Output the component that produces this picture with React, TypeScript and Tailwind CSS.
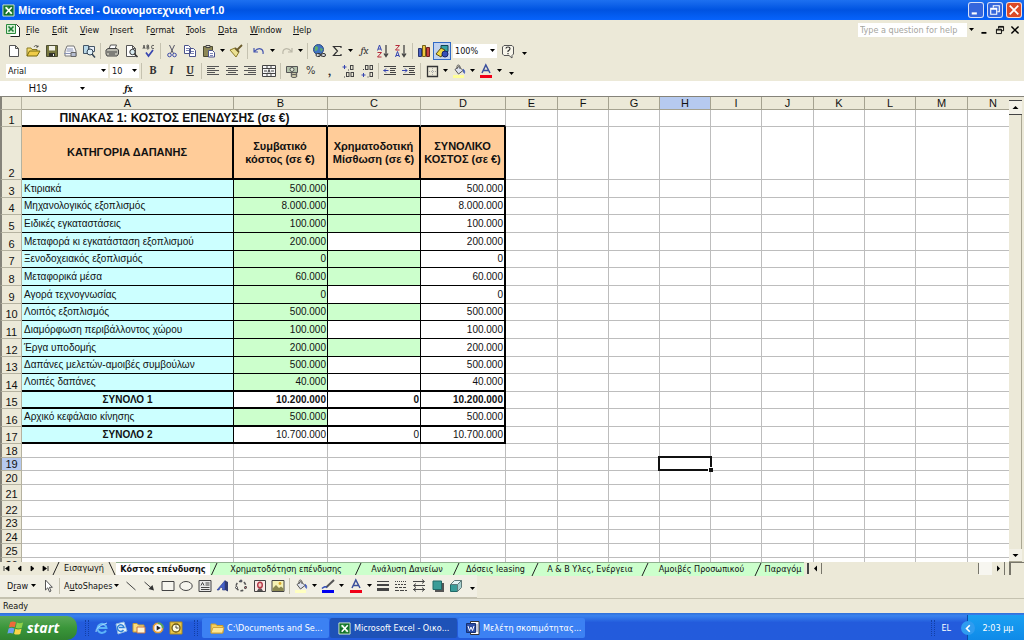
import { ReactNode } from "react";
import clsx from "clsx";

const UI_FONT = "font-['DejaVu_Sans_Condensed','DejaVu_Sans',sans-serif]";

/* ---------- icons ---------- */

function Svg({ children, className = "size-[14px]" }: { children: ReactNode; className?: string }) {
  return (
    <svg viewBox="0 0 14 14" className={clsx("shrink-0 overflow-visible", className)} fill="none" stroke="#444" aria-hidden="true">
      {children}
    </svg>
  );
}

const alignLines = (rows: [number, number][]) => (
  <Svg>
    {rows.map(([x1, x2], i) => (
      <path key={i} d={`M${x1} ${2.5 + i * 2}H${x2}`} stroke="#555" />
    ))}
  </Svg>
);

const excelIcon = (
  <Svg className="size-[13px]">
    <path d="M1 1h12v12H1z" fill="#12702b" stroke="#d8ecd0" />
    <path d="M3 3h4v3H3zM8 8h3v3H8z" fill="#4fae58" stroke="none" />
    <path d="M4 3.500l6.500 7M10.500 3.500L4 10.500" stroke="#fff" strokeWidth="1.800" />
  </Svg>
);

const bookIcon = (
  <Svg>
    <path d="M3.500 1.500h7l3 3v9h-9" fill="#fff" stroke="#222" />
    <path d="M.5 1.500h9v9h-9z" fill="#d6efd4" stroke="#2a8a3c" />
    <path d="M2.500 3.500l5 5M7.500 3.500l-5 5" stroke="#1b7d33" strokeWidth="1.600" />
  </Svg>
);

const bucket = (bar: string) => (
  <Svg>
    <path d="M3 5.500l4-3 4 4-4.500 3.500z" fill="#dfe3ee" stroke="#555" />
    <path d="M5 5V2.500c0-2 3-2 3 .5v2" stroke="#555" />
    <path d="M11 5c2 1 2 3 1.500 4.500-1-.5-1.500-2-1.500-4.500z" fill="#3b56b8" stroke="#3b56b8" strokeWidth=".5" />
    <path d="M1 12.500h11" stroke={bar} strokeWidth="3" />
  </Svg>
);

const fontColor = (
  <Svg>
    <path d="M3 9l3.800-8L11 9M4.500 6.500h5" stroke="#3a4f9c" strokeWidth="1.500" />
    <path d="M1 12.500h12" stroke="#f00018" strokeWidth="3" />
  </Svg>
);

const paper = <path d="M2.500 1.500h6l3 3v8h-9zM8.500 1.500v3h3" fill="#fff" stroke="#555" />;

const icons: Record<string, ReactNode> = {
  new: <Svg>{paper}</Svg>,
  open: (
    <Svg>
      <path d="M1 12V4h4l1 1.500h5V7" fill="#f5dc6e" stroke="#8a7a20" />
      <path d="M1 12l2.500-5H14l-3 5z" fill="#f0cc48" stroke="#75680f" />
      <path d="M8 3c1-2 3-2 4 0m0-1.500V3h-2" stroke="#333" strokeWidth=".8" />
    </Svg>
  ),
  save: (
    <Svg>
      <path d="M1.500 1.500h11v11h-11z" fill="#77773f" stroke="#4c4d33" />
      <path d="M4 2h6v4.500H4z" fill="#f1f1e6" stroke="none" />
      <path d="M4 9h6v3.500H4z" fill="#30312a" stroke="none" />
      <path d="M8.500 10v2" stroke="#eee" />
    </Svg>
  ),
  permission: (
    <Svg>
      <path d="M2 7l2-5h7l2 5v5H2z" fill="#f8f8fb" stroke="#777" />
      <path d="M4 5h6M3.500 7h7M1 9.500h9" stroke="#8a94b5" />
      <path d="M8 8.500h5v4H8z" fill="#b5bdd1" stroke="#666" />
    </Svg>
  ),
  searchDoc: (
    <Svg>
      <path d="M1.500 1.500h5v8h-5z" fill="#b8d8e8" stroke="#456" />
      <path d="M7 2.500h5.500v5H7z" fill="#e8eef8" stroke="#456" />
      <circle cx="8" cy="8" r="3" fill="#dff0f8" stroke="#345" />
      <path d="M10 10l3 3.500" stroke="#345" strokeWidth="1.500" />
    </Svg>
  ),
  print: (
    <Svg>
      <path d="M4 5l1.500-4h6L10 5z" fill="#fff" stroke="#555" />
      <path d="M1 6l2-1.500h9L13.500 6v4L12 12H2l-1-2z" fill="#b8b8ae" stroke="#444" />
      <path d="M2 8h10M4 10h6" stroke="#444" />
    </Svg>
  ),
  preview: (
    <Svg>
      {paper}
      <circle cx="8.500" cy="8" r="2.700" fill="#d9ecf2" stroke="#333" />
      <path d="M10.500 10l3 3" stroke="#333" strokeWidth="1.600" />
    </Svg>
  ),
  spelling: (
    <Svg>
      <path d="M1 5l1-4 1 4M1.500 3.500h1.200M5 1v4h1.500q1-1 0-2H5h1.300q1-1 0-2zM12 1.500q-2.500-1-2.500 1.500T12 4.500" stroke="#444" strokeWidth=".8" />
      <path d="M4 8.500l2.500 3.500L11 6" stroke="#3846b0" strokeWidth="1.700" />
    </Svg>
  ),
  cut: (
    <Svg>
      <path d="M4.500 1l4 8.500M9.500 1l-4 8.500" stroke="#556" />
      <circle cx="4.500" cy="11" r="1.800" stroke="#3c4aa8" />
      <circle cx="9.500" cy="11" r="1.800" stroke="#3c4aa8" />
    </Svg>
  ),
  copy: (
    <Svg>
      <path d="M1.500 1.500h4l2 2v6h-6zM6.500 4.500h4l2 2v6h-6z" fill="#fff" stroke="#4a538c" />
      <path d="M3 4.500h3M3 6.500h3M8 7.500h3M8 9.500h3" stroke="#7b83b5" />
    </Svg>
  ),
  paste: (
    <Svg>
      <path d="M1.500 2.500h9v10h-9z" fill="#8d8756" stroke="#4c4a32" />
      <path d="M4 1.500h4v2H4z" fill="#e0deca" stroke="#444" />
      <path d="M6.500 6.500h4l2 2v4.500h-6z" fill="#fff" stroke="#4a538c" />
      <path d="M8 9.500h3M8 11.500h3" stroke="#7b83b5" />
    </Svg>
  ),
  painter: (
    <Svg>
      <path d="M1 6l5-2 4 4-3 5z" fill="#ece193" stroke="#8b7b28" />
      <path d="M6 4l4 4M8 6l5-5" stroke="#6a5b2b" strokeWidth="1.800" />
    </Svg>
  ),
  undo: (
    <Svg>
      <path d="M2 4v4h4M2.500 7.500C6 3 12 4 11 10" stroke="#4757b0" strokeWidth="1.200" />
    </Svg>
  ),
  redo: (
    <Svg>
      <path d="M12 4v4H8M11.500 7.500C8 3 2 4 3 10" stroke="#bbb8a8" strokeWidth="1.200" />
    </Svg>
  ),
  link: (
    <Svg>
      <circle cx="6.500" cy="5.500" r="5" fill="#4173c0" stroke="#2b4b86" />
      <path d="M3 2.500q3-1 3 1.500t-3 3zM8 4l3 1-2 3z" fill="#63b06a" stroke="none" />
      <rect x="4" y="9.500" width="4.500" height="3" rx="1.500" fill="#d2d6de" stroke="#333" />
      <rect x="9" y="9.500" width="4.500" height="3" rx="1.500" fill="#d2d6de" stroke="#333" />
      <path d="M6.500 11h4" />
    </Svg>
  ),
  sum: (
    <Svg>
      <path d="M11 4V2.500H3.500L7.500 7l-4 4.500H11V10" stroke="#333" strokeWidth="1.200" />
    </Svg>
  ),
  sortAsc: (
    <Svg>
      <path d="M1.500 6.500L3.500 1l2 5.500M2 5h3" stroke="#3444b0" />
      <path d="M1.500 8.500h4l-4 4.500h4" stroke="#b52a3a" />
      <path d="M10 1v11M8 9.500l2 3 2-3" stroke="#444" strokeWidth="1.300" />
    </Svg>
  ),
  sortDesc: (
    <Svg>
      <path d="M1.500 1.500h4l-4 4.500h4" stroke="#b52a3a" />
      <path d="M1.500 13l2-5.500 2 5.500M2 11.500h3" stroke="#3444b0" />
      <path d="M10 1v11M8 9.500l2 3 2-3" stroke="#444" strokeWidth="1.300" />
    </Svg>
  ),
  chart: (
    <Svg>
      <path d="M1.500 4.500h3v8h-3z" fill="#4a62c4" stroke="#28346f" />
      <path d="M5.500 1.500h3v11h-3z" fill="#efc842" stroke="#75601a" />
      <path d="M9.500 3.500h3v9h-3z" fill="#c9433e" stroke="#6c2020" />
    </Svg>
  ),
  drawing: (
    <Svg>
      <path d="M6 1.500h7v6H6z" fill="#38a3a5" stroke="#145" />
      <path d="M1 10l5-6 4 2-4 7z" fill="#f1d944" stroke="#544a10" />
      <circle cx="10" cy="10" r="3" fill="#3550b8" stroke="#152468" />
    </Svg>
  ),
  help: (
    <Svg>
      <path d="M3 1.500h8l1.500 1.500v7L11 11.500V14L8 11.500H3L1.500 10V3z" fill="#f7f5ea" stroke="#555" />
      <path d="M5 4.500q0-1.500 2-1.500t2 1.500T7 7v1M7 9v1.200" stroke="#333" strokeWidth="1.200" />
    </Svg>
  ),
  alignLeft: alignLines([[1, 13], [1, 9], [1, 13], [1, 9], [1, 13]]),
  alignCenter: alignLines([[1, 13], [3, 11], [1, 13], [3, 11], [1, 13]]),
  alignRight: alignLines([[1, 13], [5, 13], [1, 13], [5, 13], [1, 13]]),
  merge: (
    <Svg>
      <path d="M.5 1.500h13v11H.5zM.5 4.500h13M.5 9.500h13M5 1.500v3M9 1.500v3M5 9.500v3M9 9.500v3" fill="#f6f6f6" />
      <path d="M2 7h3M9 7h3M6 8.500L7 5.500l1 3" />
    </Svg>
  ),
  currency: (
    <Svg>
      <path d="M1.500 2.500h11v6h-11z" fill="#b4c3ac" stroke="#555" />
      <circle cx="7" cy="5.500" r="2" fill="#e3ead8" stroke="#555" />
      <ellipse cx="9" cy="10" rx="3" ry="1.500" fill="#d8d3b0" stroke="#555" />
      <ellipse cx="9" cy="12" rx="3" ry="1.500" fill="#d8d3b0" stroke="#555" />
    </Svg>
  ),
  incDecimal: (
    <Svg>
      <path d="M3.500 1v4M1.500 3h4" stroke="#3444b0" />
      <rect x="9.500" y="1.500" width="2.500" height="4" />
      <path d="M7.500 5.500v1M3.500 12.500v1" />
      <rect x="5.500" y="8.500" width="2.500" height="4" />
      <rect x="10" y="8.500" width="2.500" height="4" />
    </Svg>
  ),
  decDecimal: (
    <Svg>
      <path d="M3.500 9v4M1.500 11h4" stroke="#3444b0" />
      <rect x="5.500" y="1.500" width="2.500" height="4" />
      <rect x="10" y="1.500" width="2.500" height="4" />
      <path d="M3.500 5v1M8 12.500v1" />
      <rect x="10" y="8.500" width="2.500" height="4" />
    </Svg>
  ),
  outdent: (
    <Svg>
      <path d="M1 2.500h12M7 4.500h6M7 6.500h5M7 8.500h6M1 10.500h12" />
      <path d="M5.500 6.500h-5M3 4.500l-2 2 2 2" stroke="#3444b0" />
    </Svg>
  ),
  indent: (
    <Svg>
      <path d="M1 2.500h12M7 4.500h6M7 6.500h5M7 8.500h6M1 10.500h12" />
      <path d="M0 6.500h5M3 4.500l2 2-2 2" stroke="#3444b0" />
    </Svg>
  ),
  borders: (
    <Svg>
      <path d="M2.500 2.500h10v10h-10z" stroke="#333" strokeWidth="1.300" />
      <path d="M7.500 4v7M4 7.500h7" stroke="#aaa" strokeDasharray="1 1" />
    </Svg>
  ),
  fill: bucket("#ffff99"),
  fillShape: bucket("#ffffc0"),
  fontColor,
  lineColor: (
    <Svg>
      <path d="M5 8.500l8-7.500" stroke="#555" strokeWidth="2" />
      <path d="M1 9.500q3-3 5-1" stroke="#3550b8" strokeWidth="1.500" />
      <path d="M1 12.500h12" stroke="#0000f0" strokeWidth="3" />
    </Svg>
  ),
  pointer: (
    <Svg>
      <path d="M4.500 1v10l2.300-2.200 1.700 4 1.500-.8-1.600-3.700h3z" fill="#fff" stroke="#555" />
    </Svg>
  ),
  line: (
    <Svg>
      <path d="M2.500 3l9 8" />
    </Svg>
  ),
  arrow: (
    <Svg>
      <path d="M2.500 3l8 7" />
      <path d="M12 11.500L6.500 10l4-4z" fill="#333" stroke="none" />
    </Svg>
  ),
  rect: (
    <Svg>
      <path d="M1 2.500h12v9H1z" fill="#f6f5ee" />
    </Svg>
  ),
  oval: (
    <Svg>
      <ellipse cx="7" cy="7" rx="6.200" ry="4.500" fill="#f6f5ee" />
    </Svg>
  ),
  textbox: (
    <Svg>
      <path d="M1 1.500h12v11H1z" fill="#e8e8e8" />
      <path d="M3 6.500l1.500-3 1.500 3M7.500 4h4M7.500 6h4M3 8.500h8.500M3 10.500h8.500" />
    </Svg>
  ),
  wordart: (
    <Svg>
      <path d="M1 11L9 1.500v9.500H6.500V8.500H4.500L3 11z" fill="#4461c9" stroke="#29388a" strokeWidth=".6" />
      <path d="M9 1.500l3 1.500v9.500L9 11z" fill="#303c74" stroke="none" />
    </Svg>
  ),
  diagram: (
    <Svg>
      <circle cx="7" cy="7" r="4.800" strokeDasharray="3 2" stroke="#555" strokeWidth="1.500" />
      <circle cx="7" cy="2" r="1" fill="#8fa0d8" />
      <circle cx="2.500" cy="8.500" r="1" fill="#f4f4f4" />
      <circle cx="11.500" cy="8.500" r="1" fill="#c9787e" />
    </Svg>
  ),
  clipart: (
    <Svg>
      <path d="M1.500 1.500h11v11h-11z" fill="#fbe9e6" stroke="#444" />
      <path d="M4 12l1.500-2.500H8.500L10 12z" fill="#555" stroke="none" />
      <ellipse cx="7" cy="6" rx="2.300" ry="2.800" fill="#f6cfc4" stroke="#b53a4a" strokeWidth="1.400" />
      <path d="M7 8.500v2" stroke="#b53a4a" />
    </Svg>
  ),
  picture: (
    <Svg>
      <path d="M1 1.500h12v11H1z" fill="#f6f2b4" stroke="#444" />
      <path d="M1.500 12V9.500L5 6l3 3 2-1.500 2.500 2V12z" fill="#8a8750" stroke="none" />
      <circle cx="9" cy="4.500" r="1.400" fill="#d8a72e" stroke="none" />
    </Svg>
  ),
  lineStyle: (
    <Svg>
      <path d="M1 2.500h12" />
      <path d="M1 6h12" strokeWidth="2" />
      <path d="M1 10.500h12" strokeWidth="3" />
    </Svg>
  ),
  dashStyle: (
    <Svg>
      <path d="M1 2.500h12" strokeDasharray="1 1" />
      <path d="M1 5.500h12" strokeDasharray="2 1" />
      <path d="M1 8.500h12" strokeDasharray="3 1" />
      <path d="M1 11.500h12" strokeDasharray="4 1" />
    </Svg>
  ),
  arrowStyle: (
    <Svg>
      <path d="M1 2.500h11M2 6.500h11M1 10.500h12M10 .5l2.500 2-2.500 2M4 4.500l-2.500 2 2.500 2M10 8.500l2.500 2-2.500 2M4 8.500l-2.500 2 2.500 2" />
    </Svg>
  ),
  shadow: (
    <Svg>
      <path d="M4 4h9v9H4z" fill="#555" stroke="none" />
      <path d="M2 2h8.500v8.500H2z" fill="#3a9c98" stroke="#206a68" />
    </Svg>
  ),
  cube: (
    <Svg>
      <path d="M1.500 5.500h7v7h-7z" fill="#3a9c98" stroke="#206a68" />
      <path d="M1.500 5.500l4-4h7l-4 4z" fill="#e4f4f4" stroke="#607a7a" />
      <path d="M12.500 1.500v7l-4 4v-7z" fill="#a7cfce" stroke="#607a7a" />
    </Svg>
  ),
  ie: (
    <Svg>
      <path d="M11 9.500A4.500 4.500 0 1 1 11.500 7H3" stroke="#5cb4f8" strokeWidth="2" />
      <path d="M1 11Q0 6 12 2" stroke="#a8dafc" />
    </Svg>
  ),
  outlook: (
    <Svg>
      <path d="M2 3l8-2 3 9-9 3z" fill="#e6f2fc" stroke="#8cb8e0" />
      <path d="M9.500 9A3.300 3.300 0 1 1 10 6.500H5" stroke="#2b7fd8" strokeWidth="1.500" />
    </Svg>
  ),
  explorer: (
    <Svg>
      <path d="M1 11V2.500h4L6.500 4H12v7z" fill="#f9dd82" stroke="#c59a35" />
      <path d="M5 6h8v6H5z" fill="#fff5d6" stroke="#c87540" />
    </Svg>
  ),
  media: (
    <Svg>
      <circle cx="7" cy="7" r="5.800" fill="#e9a13a" stroke="#486bb0" />
      <path d="M7 1.200A5.800 5.800 0 0 1 12.800 7H7z" fill="#58a85a" stroke="none" />
      <circle cx="7" cy="7" r="3.700" fill="#f8f8ff" stroke="none" />
      <path d="M5.700 4.500L9.800 7l-4.100 2.500z" fill="#222" stroke="none" />
    </Svg>
  ),
  clock: (
    <Svg>
      <path d="M1 1h12v12H1z" fill="#e8c548" stroke="#a88a20" />
      <circle cx="7" cy="7" r="4" fill="#fffbe0" stroke="#6a5712" strokeWidth="1.300" />
      <path d="M7 4.500V7h2.500" />
    </Svg>
  ),
  folder: (
    <Svg>
      <path d="M1 12V3h4.500L7 4.500h6V12z" fill="#f5cf5c" stroke="#c89a2a" />
      <path d="M1 12l2-5.500h11L12.500 12z" fill="#ffe794" stroke="#d0a63a" />
    </Svg>
  ),
  word: (
    <Svg>
      <path d="M4.500.5H13v13H4.500z" fill="#fff" stroke="#333" />
      <path d="M10 4h2M10 6h2M10 8h2M10 10h2" stroke="#8899c0" />
      <path d="M.5 2.500h9v9h-9z" fill="#2d4fa8" stroke="#16306f" />
      <path d="M2 5l1.500 4.500L5 6l1.500 3.500L8 5" stroke="#fff" />
    </Svg>
  ),
  flag: (
    <Svg className="size-[18px]">
      <g stroke="none">
        <path d="M2.500 2.500q2-1 4.500 0L6 6.500q-2-1-4.500 0z" fill="#ef6a3a" />
        <path d="M7.700 2.800q2 1 4.800 0l-1 4q-2.500 1-4.800 0z" fill="#8fd04a" />
        <path d="M1.300 7.300q2-1 4.500 0l-1 4q-2.500-1-4.500 0z" fill="#68a0ee" />
        <path d="M6.500 7.600q2 1 4.800 0l-1 4q-2.500 1-4.800 0z" fill="#f9d548" />
      </g>
    </Svg>
  ),
};

const glyphs: Record<string, ReactNode> = {
  bold: <b className="font-serif text-[11px]">B</b>,
  italic: <b className="font-serif text-[11px] italic">I</b>,
  underline: <b className="font-serif text-[11px] underline">U</b>,
  percent: <span className="text-[11px]">%</span>,
  comma: <b className="font-serif text-[14px]">,</b>,
  fx: <i className="font-serif text-[11px]">fx</i>,
};

function Caret({ className = "w-[7px]" }: { className?: string }) {
  return (
    <svg viewBox="0 0 7 4" className={clsx("h-1 shrink-0", className)} aria-hidden="true">
      <path d="M1 0h5L3.500 3z" fill="#000" />
    </svg>
  );
}

/* ---------- toolbars ---------- */

// A trailing "+" gives the button a drop-down caret.
function ToolButton({ id }: { id: string }) {
  const name = id.replace("+", "");
  return (
    <span className="flex items-center">
      <button
        type="button"
        aria-label={name}
        className={clsx(
          "flex h-[18px] w-[18px] items-center justify-center text-[#333]",
          name === "drawing" && "border border-[#316ac5] bg-[#c1d2ee]",
        )}
      >
        {icons[name] ?? glyphs[name]}
      </button>
      {id.endsWith("+") && (
        <button type="button" aria-label={`${name} options`} className="flex h-[18px] w-[9px] items-center justify-center">
          <Caret />
        </button>
      )}
    </span>
  );
}

function ToolGroup({ ids, width }: { ids: string[]; width: string }) {
  return (
    <div className={clsx("flex shrink-0 items-center justify-between", width)}>
      {ids.map(id => (
        <ToolButton key={id} id={id} />
      ))}
    </div>
  );
}

const Separator = () => <div className="h-4 w-px shrink-0 bg-[#c5c2b0]" />;

const Overflow = () => (
  <button type="button" aria-label="Toolbar options" className="flex h-[18px] w-[10px] items-end justify-center pb-1">
    <Caret />
  </button>
);

function Combo({ label, value, width }: { label: string; value: string; width: string }) {
  return (
    <label className={clsx("flex h-[14px] items-center bg-white pl-0.5", width)}>
      <select aria-label={label} className="w-0 flex-1 appearance-none bg-transparent text-[9px] leading-[14px] outline-none">
        <option>{value}</option>
      </select>
      <Caret className="w-[9px]" />
    </label>
  );
}

const menus = [
  { text: "File", key: 0, width: "w-[26px]" },
  { text: "Edit", key: 0, width: "w-[28px]" },
  { text: "View", key: 0, width: "w-[30px]" },
  { text: "Insert", key: 0, width: "w-[36px]" },
  { text: "Format", key: 1, width: "w-[40px]" },
  { text: "Tools", key: 0, width: "w-[32px]" },
  { text: "Data", key: 0, width: "w-[32px]" },
  { text: "Window", key: 0, width: "w-[43px]" },
  { text: "Help", key: 0, width: "w-[26px]" },
];

function TitleBar() {
  const button = "flex size-4 items-center justify-center rounded-[3px] border border-white/80";
  return (
    <header className="flex h-5 shrink-0 items-center bg-linear-to-b from-[#1d70f0] via-[#0053e1] to-[#0763fc] pr-[2px] pl-[2px]">
      {excelIcon}
      <h1 className="ml-[3px] flex-1 font-['Open_Sans','Noto_Sans',sans-serif] text-[10px] font-bold text-white">
        Microsoft Excel - Οικονομοτεχνική ver1.0
      </h1>
      <div className="flex gap-[3px]">
        <button type="button" aria-label="Minimize" className={clsx(button, "bg-[#3566dc]")}>
          <Svg className="size-3"><path d="M2 11h6" stroke="#fff" strokeWidth="2.500" /></Svg>
        </button>
        <button type="button" aria-label="Restore" className={clsx(button, "bg-[#3566dc]")}>
          <Svg className="size-3"><path d="M5 4V2h7v7h-2M2 5h7v7H2zM2 6h7" stroke="#fff" strokeWidth="1.300" /></Svg>
        </button>
        <button type="button" aria-label="Close" className={clsx(button, "bg-[#dc4a26]")}>
          <Svg className="size-3"><path d="M2 2l10 10M12 2L2 12" stroke="#fff" strokeWidth="2" /></Svg>
        </button>
      </div>
    </header>
  );
}

function MenuBar() {
  return (
    <nav className="flex h-5 shrink-0 items-center pr-1 pl-[6px]">
      {bookIcon}
      <div className="ml-[6px] flex flex-1">
        {menus.map(m => (
          <button key={m.text} type="button" className={clsx("text-left", m.width)}>
            {m.text.slice(0, m.key)}
            <u>{m.text[m.key]}</u>
            {m.text.slice(m.key + 1)}
          </button>
        ))}
      </div>
      <input
        aria-label="Type a question for help"
        placeholder="Type a question for help"
        className="h-[14px] w-[109px] bg-white pl-0.5 outline-none placeholder:text-[#a5a5a0]"
      />
      <Caret className="w-[9px]" />
      <div className="ml-1 flex gap-[5px]">
        <button type="button" aria-label="Minimize workbook">
          <Svg className="size-[10px]"><path d="M2 11h7" stroke="#000" strokeWidth="2.500" /></Svg>
        </button>
        <button type="button" aria-label="Restore workbook">
          <Svg className="size-[10px]"><path d="M5 5V2h7v6h-3M2 6h7v6H2zM5 3h7M2 7h7" stroke="#000" strokeWidth="1.300" /></Svg>
        </button>
        <button type="button" aria-label="Close workbook">
          <Svg className="size-[10px]"><path d="M2 2l10 10M12 2L2 12" stroke="#000" strokeWidth="2" /></Svg>
        </button>
      </div>
    </nav>
  );
}

function StandardToolbar() {
  return (
    <div className="flex h-[21px] shrink-0 items-center gap-[2px] pl-[5px]">
      <ToolGroup ids={["new", "open", "save", "permission", "searchDoc"]} width="w-[93px]" />
      <Separator />
      <ToolGroup ids={["print", "preview", "spelling"]} width="w-[55px]" />
      <Separator />
      <ToolGroup ids={["cut", "copy", "paste+", "painter"]} width="w-[82px]" />
      <Separator />
      <ToolGroup ids={["undo+", "redo+"]} width="w-[55px]" />
      <Separator />
      <ToolGroup ids={["link", "sum+", "fx", "sortAsc", "sortDesc"]} width="w-[100px]" />
      <Separator />
      <ToolGroup ids={["chart", "drawing"]} width="w-[36px]" />
      <Combo label="Zoom" value="100%" width="w-[44px]" />
      <ToolGroup ids={["help"]} width="w-[18px]" />
      <Overflow />
    </div>
  );
}

function FormatToolbar() {
  return (
    <div className="flex h-5 shrink-0 items-center gap-[2px] pl-[6px]">
      <Combo label="Font" value="Arial" width="w-[102px]" />
      <Combo label="Font size" value="10" width="w-[29px]" />
      <Separator />
      <ToolGroup ids={["bold", "italic", "underline"]} width="w-[55px]" />
      <Separator />
      <ToolGroup ids={["alignLeft", "alignCenter", "alignRight", "merge"]} width="w-[74px]" />
      <Separator />
      <ToolGroup ids={["currency", "percent", "comma", "incDecimal", "decDecimal"]} width="w-[93px]" />
      <Separator />
      <ToolGroup ids={["outdent", "indent"]} width="w-[37px]" />
      <Separator />
      <ToolGroup ids={["borders+", "fill+", "fontColor+"]} width="w-[81px]" />
      <Overflow />
    </div>
  );
}

function FormulaBar() {
  return (
    <div className="flex h-[15px] shrink-0 items-center bg-white">
      <input
        aria-label="Name box"
        defaultValue="H19"
        className="w-[76px] text-center font-['Liberation_Sans',Arial,sans-serif] text-[10px] outline-none"
      />
      <Caret className="w-[13px]" />
      <button type="button" aria-label="Insert function" className="ml-[31px] w-[17px] font-serif text-[10px] font-bold italic">
        fx
      </button>
      <input aria-label="Formula" className="h-full min-w-0 flex-1 outline-none" />
    </div>
  );
}

/* ---------- sheet ---------- */

const columns = [
  { name: "A", width: "w-[212px]" },
  { name: "B", width: "w-[94px]" },
  { name: "C", width: "w-[93px]" },
  { name: "D", width: "w-[85px]" },
  { name: "E", width: "w-[52px]" },
  { name: "F", width: "w-[51px]" },
  { name: "G", width: "w-[51px]" },
  { name: "H", width: "w-[51px]" },
  { name: "I", width: "w-[51px]" },
  { name: "J", width: "w-[52px]" },
  { name: "K", width: "w-[51px]" },
  { name: "L", width: "w-[51px]" },
  { name: "M", width: "w-[52px]" },
  { name: "N", width: "w-[51px]" },
];

interface CostRow {
  label: string;
  b: string;
  c?: string;
  d: string;
  height: string;
  leased?: boolean; // column C open for input
  total?: boolean;
  bold?: boolean;
  thick?: boolean;
}

const costs: CostRow[] = [
  { label: "Κτιριακά", b: "500.000", d: "500.000", height: "h-[18px]", leased: true },
  { label: "Μηχανολογικός εξοπλισμός", b: "8.000.000", d: "8.000.000", height: "h-[17px]", leased: true },
  { label: "Ειδικές εγκαταστάσεις", b: "100.000", d: "100.000", height: "h-[18px]", leased: true },
  { label: "Μεταφορά κι εγκατάσταση εξοπλισμού", b: "200.000", d: "200.000", height: "h-[18px]" },
  { label: "Ξενοδοχειακός εξοπλισμός", b: "0", d: "0", height: "h-[17px]", leased: true },
  { label: "Μεταφορικά μέσα", b: "60.000", d: "60.000", height: "h-[18px]", leased: true },
  { label: "Αγορά τεχνογνωσίας", b: "0", d: "0", height: "h-[18px]" },
  { label: "Λοιπός εξοπλισμός", b: "500.000", d: "500.000", height: "h-[17px]", leased: true },
  { label: "Διαμόρφωση περιβάλλοντος χώρου", b: "100.000", d: "100.000", height: "h-[18px]" },
  { label: "Έργα υποδομής", b: "200.000", d: "200.000", height: "h-[18px]", leased: true },
  { label: "Δαπάνες μελετών-αμοιβές συμβούλων", b: "500.000", d: "500.000", height: "h-[17px]" },
  { label: "Λοιπές δαπάνες", b: "40.000", d: "40.000", height: "h-[18px]", thick: true },
  { label: "ΣΥΝΟΛΟ 1", b: "10.200.000", c: "0", d: "10.200.000", height: "h-[17px]", total: true, bold: true, thick: true },
  { label: "Αρχικό κεφάλαιο κίνησης", b: "500.000", d: "500.000", height: "h-[18px]", thick: true },
  { label: "ΣΥΝΟΛΟ 2", b: "10.700.000", c: "0", d: "10.700.000", height: "h-[17px]", total: true, thick: true },
];

const emptyRows = [
  { n: 18, height: "h-[14px]" },
  { n: 19, height: "h-[13px]" },
  { n: 20, height: "h-[14px]" },
  { n: 21, height: "h-[16px]" },
  { n: 22, height: "h-[16px]" },
  { n: 23, height: "h-[13px]" },
  { n: 24, height: "h-[14px]" },
  { n: 25, height: "h-[14px]" },
  { n: 26, height: "h-[14px]" },
];

const gridCell = "border-r border-b border-[#bdbdbd] p-0";

function RowHead({ n, active }: { n: number; active?: boolean }) {
  return (
    <th
      scope="row"
      className={clsx(
        "border-r border-b border-l-2 border-r-[#b5b2a0] border-b-[#b5b2a0] border-l-[#85837a] p-0 align-bottom text-[11px] leading-[12px] font-normal",
        active ? "bg-[#b6caf0]" : "bg-[#ece9d8]",
      )}
    >
      {n}
    </th>
  );
}

function GridCells({ from }: { from: number }) {
  return columns.slice(from).map(c => <td key={c.name} className={gridCell} />);
}

function Sheet() {
  const head = "border-r-2 border-b-2 border-black bg-[#ffcc99] p-0 text-center text-[11px] leading-[13px] font-bold";
  return (
    <div className="min-w-0 flex-1 overflow-hidden bg-white">
      <table className="w-full table-fixed border-separate border-spacing-0 font-['Liberation_Sans',Arial,sans-serif] text-[10px] leading-[12px] text-[#111]">
        <colgroup>
          <col className="w-[22px]" />
          {columns.map(c => (
            <col key={c.name} className={c.width} />
          ))}
        </colgroup>
        <thead>
          <tr className="h-[13px] bg-[#ece9d8]">
            <td className="border-r border-b border-l-2 border-[#b5b2a0] border-l-[#85837a] p-0" />
            {columns.map(c => (
              <th
                key={c.name}
                scope="col"
                className={clsx("border-r border-b border-[#a5a290] p-0 text-[11px] leading-[12px] font-normal", c.name === "H" && "bg-[#b6caf0]")}
              >
                {c.name}
              </th>
            ))}
          </tr>
        </thead>
        <tbody>
          <tr className="h-[17px]">
            <RowHead n={1} />
            <td colSpan={2} className="border-r border-b-2 border-r-[#bdbdbd] border-b-black p-0 text-center text-[12px] font-bold">
              ΠΙΝΑΚΑΣ 1: ΚΟΣΤΟΣ ΕΠΕΝΔΥΣΗΣ (σε €)
            </td>
            <td className="border-r border-b-2 border-r-[#bdbdbd] border-b-black p-0" />
            <td className="border-r border-b-2 border-r-[#bdbdbd] border-b-black p-0" />
            <GridCells from={4} />
          </tr>
          <tr className="h-[53px]">
            <RowHead n={2} />
            <td className={head}>ΚΑΤΗΓΟΡΙΑ ΔΑΠΑΝΗΣ</td>
            <td className={head}>Συμβατικό<br />κόστος (σε €)</td>
            <td className={head}>Χρηματοδοτική<br />Μίσθωση (σε €)</td>
            <td className={head}>ΣΥΝΟΛΙΚΟ<br />ΚΟΣΤΟΣ (σε €)</td>
            <GridCells from={4} />
          </tr>
          {costs.map((row, i) => {
            const cell = clsx(
              "border-black py-0 whitespace-nowrap",
              row.thick ? "border-b-2" : "border-b",
              row.bold && "font-bold",
            );
            return (
              <tr key={row.label} className={row.height}>
                <RowHead n={i + 3} />
                <td className={clsx(cell, "border-r bg-[#ccffff] px-0.5", row.total && "text-center font-bold")}>{row.label}</td>
                <td className={clsx(cell, "border-r px-px text-right", !row.total && "bg-[#ccffcc]")}>{row.b}</td>
                <td className={clsx(cell, "border-r px-px text-right", row.leased && "bg-[#ccffcc]")}>{row.c}</td>
                <td className={clsx(cell, "border-r-2 px-px text-right")}>{row.d}</td>
                <GridCells from={4} />
              </tr>
            );
          })}
          {emptyRows.map(row => (
            <tr key={row.n} className={row.height}>
              <RowHead n={row.n} active={row.n === 19} />
              {columns.map(c =>
                row.n === 19 && c.name === "H" ? (
                  <td key={c.name} className={clsx(gridCell, "relative")}>
                    <span className="absolute -top-[2px] -right-[2px] -bottom-[1px] -left-[2px] border-2 border-[#111]" />
                    <span className="absolute -right-[3px] -bottom-[2px] size-[5px] border-t border-l border-white bg-[#111]" />
                  </td>
                ) : (
                  <td key={c.name} className={gridCell} />
                ),
              )}
            </tr>
          ))}
        </tbody>
      </table>
    </div>
  );
}

function VerticalScroll() {
  return (
    <div className="flex w-[15px] shrink-0 flex-col bg-[#ece9d8] pt-[3px] pr-[2px]">
      <button type="button" aria-label="Scroll up" className="flex h-[15px] items-center justify-center border-y border-[#444] bg-[#f3f1e7]">
        <Svg className="size-[7px]"><path d="M1 10h12L7 4z" fill="#000" stroke="none" /></Svg>
      </button>
      <div className="flex-1 border-r border-[#aaa794] bg-[#ece9d8]" />
      <button type="button" aria-label="Scroll down" className="flex h-[13px] items-center justify-center border-b border-[#aaa794] bg-[#f3f1e7]">
        <Svg className="size-[7px]"><path d="M1 4h12L7 10z" fill="#000" stroke="none" /></Svg>
      </button>
    </div>
  );
}

const tabs = [
  { text: "Χρηματοδότηση επένδυσης", width: "w-[136px]" },
  { text: "Ανάλυση Δανείων", width: "w-[90px]" },
  { text: "Δόσεις leasing", width: "w-[71px]" },
  { text: "Α & Β Υλες, Ενέργεια", width: "w-[102px]" },
  { text: "Αμοιβές Προσωπικού", width: "w-[105px]" },
  { text: "Παραγόμ", width: "w-[42px]" },
];

const Slash = ({ back = false }: { back?: boolean }) => (
  <svg viewBox="0 0 8 13" className="h-[13px] w-2 shrink-0" aria-hidden="true">
    <path d={back ? "M1 0l6 13" : "M7 0L1 13"} stroke="#222" />
  </svg>
);

const tabNav = [
  { name: "First sheet", d: "M2 2v10M12 2L5 7l7 5z" },
  { name: "Previous sheet", d: "M10 2L4 7l6 5z" },
  { name: "Next sheet", d: "M4 2l6 5-6 5z" },
  { name: "Last sheet", d: "M12 2v10M2 2l7 5-7 5z" },
];

function SheetTabs() {
  return (
    <div className="flex h-[13px] shrink-0 items-center bg-[#ece9d8]">
      {tabNav.map(b => (
        <button key={b.name} type="button" aria-label={b.name} className="flex w-[13px] justify-center">
          <Svg className="size-[7px]"><path d={b.d} fill="#000" stroke="#000" strokeWidth="1.500" /></Svg>
        </button>
      ))}
      <Slash />
      <button type="button" className="w-12 leading-[13px]">Εισαγωγή</button>
      <Slash back />
      <div className="flex min-w-0 flex-1 items-center overflow-hidden border-t border-[#8fb08f] bg-[#ccffcc]">
        <button type="button" className="w-[94px] shrink-0 bg-white leading-[13px] font-bold whitespace-nowrap">
          Κόστος επένδυσης
        </button>
        {tabs.map(t => (
          <div key={t.text} className="flex shrink-0">
            <Slash />
            <button type="button" className={clsx("shrink-0 leading-[13px] whitespace-nowrap", t.width)}>
              {t.text}
            </button>
          </div>
        ))}
      </div>
      <div className="flex h-full w-[220px] shrink-0 items-center">
        <div className="ml-[3px] h-[11px] w-[2px] bg-[#444]" />
        <button type="button" aria-label="Scroll left" className="flex w-[12px] justify-center">
          <Svg className="size-[7px]"><path d="M10 1v12L4 7z" fill="#000" stroke="none" /></Svg>
        </button>
        <div className="h-[11px] w-[158px] border-x border-[#77756a] bg-[#ece9d8]" />
        <div className="h-full flex-1 bg-[#f7f6f0]" />
        <button type="button" aria-label="Scroll right" className="flex h-full w-[13px] items-center justify-center border-r border-[#77756a]">
          <Svg className="size-[7px]"><path d="M4 1v12l6-6z" fill="#000" stroke="none" /></Svg>
        </button>
        <div className="ml-1 h-full w-[15px] border-t border-l-2 border-[#77756a]" />
      </div>
    </div>
  );
}

/* ---------- bottom bars ---------- */

function DrawToolbar() {
  return (
    <div className="flex h-[23px] shrink-0 items-center">
      <div className="flex h-full items-center gap-[2px] border-b border-[#c5c2b0] bg-[#f1efe4] pl-[7px]">
        <button type="button" className="flex w-[30px] items-center justify-between">
          <span>D<u>r</u>aw</span>
          <Caret />
        </button>
        <ToolGroup ids={["pointer"]} width="w-[18px]" />
        <Separator />
        <button type="button" className="ml-[2px] flex w-[56px] items-center justify-between">
          <span>A<u>u</u>toShapes</span>
          <Caret />
        </button>
        <ToolGroup
          ids={["line", "arrow", "rect", "oval", "textbox", "wordart", "diagram", "clipart", "picture"]}
          width="w-[165px]"
        />
        <Separator />
        <ToolGroup
          ids={["fillShape+", "lineColor+", "fontColor+", "lineStyle", "dashStyle", "arrowStyle", "shadow", "cube"]}
          width="w-[173px]"
        />
        <Overflow />
      </div>
    </div>
  );
}

const quickLaunch = ["ie", "outlook", "explorer", "media", "clock"];

const tasks = [
  { title: "C:\\Documents and Se...", icon: icons.folder },
  { title: "Microsoft Excel - Οικο...", icon: excelIcon, active: true },
  { title: "Μελέτη σκοπιμότητας...", icon: icons.word },
];

const Grip = () => <div className="h-4 w-1 border-x border-dotted border-[#123fa5]" />;

function Taskbar() {
  return (
    <footer className="flex h-[27px] shrink-0 items-end bg-linear-to-b from-[#2f6fd8] from-0% via-[#3a82ee] via-10% to-[#235bdc] to-35%">
      <button
        type="button"
        className="flex h-6 w-[77px] items-center rounded-r-[10px] bg-linear-to-b from-[#5aa858] via-[#3a963a] to-[#2f8230] pl-[7px] font-['Open_Sans',sans-serif] text-[14px] font-bold text-white italic"
      >
        {icons.flag}
        <span className="ml-[2px]">start</span>
      </button>
      <div className="flex h-6 flex-1 items-center">
        <div className="ml-2 flex items-center">
          <Grip />
          <div className="ml-1 flex w-[92px] items-center justify-between">
            {quickLaunch.map(q => (
              <ToolButton key={q} id={q} />
            ))}
          </div>
          <div className="ml-[9px]"><Grip /></div>
        </div>
        <div className="ml-1 flex flex-1 gap-px">
          {tasks.map(t => (
            <button
              key={t.title}
              type="button"
              className={clsx(
                "flex h-5 w-[127px] items-center gap-[3px] overflow-hidden rounded-[2px] pl-2 whitespace-nowrap text-white",
                t.active ? "bg-[#1e52b7]" : "bg-[#3c81f3]",
              )}
            >
              {t.icon}
              {t.title}
            </button>
          ))}
        </div>
        <Grip />
        <span className="mr-4 ml-[6px] text-white">EL</span>
      </div>
      <div className="relative flex h-[25px] w-[57px] items-center justify-center border-l border-[#0a4ca8] bg-linear-to-b from-[#1aa0f2] to-[#0f8ae8] pl-1 text-white">
        <button type="button" aria-label="Show hidden icons" className="absolute top-[6px] -left-[7px] flex size-[14px] items-center justify-center rounded-full bg-[#2f9cf0]">
          <Svg className="size-[9px]"><path d="M9 2L4 7l5 5" stroke="#fff" strokeWidth="2.500" /></Svg>
        </button>
        2:03 μμ
      </div>
    </footer>
  );
}

export default function App() {
  return (
    <div className={clsx("flex h-screen flex-col overflow-hidden bg-[#ece9d8] text-[9px] leading-[12px] text-[#111]", UI_FONT)}>
      <TitleBar />
      <MenuBar />
      <StandardToolbar />
      <FormatToolbar />
      <FormulaBar />
      <main className="flex min-h-0 flex-1 border-t border-[#85837a]">
        <Sheet />
        <VerticalScroll />
      </main>
      <SheetTabs />
      <DrawToolbar />
      <div role="status" className="flex h-[15px] shrink-0 items-center border-t border-[#c5c2b0] pl-[3px]">
        Ready
      </div>
      <Taskbar />
    </div>
  );
}
